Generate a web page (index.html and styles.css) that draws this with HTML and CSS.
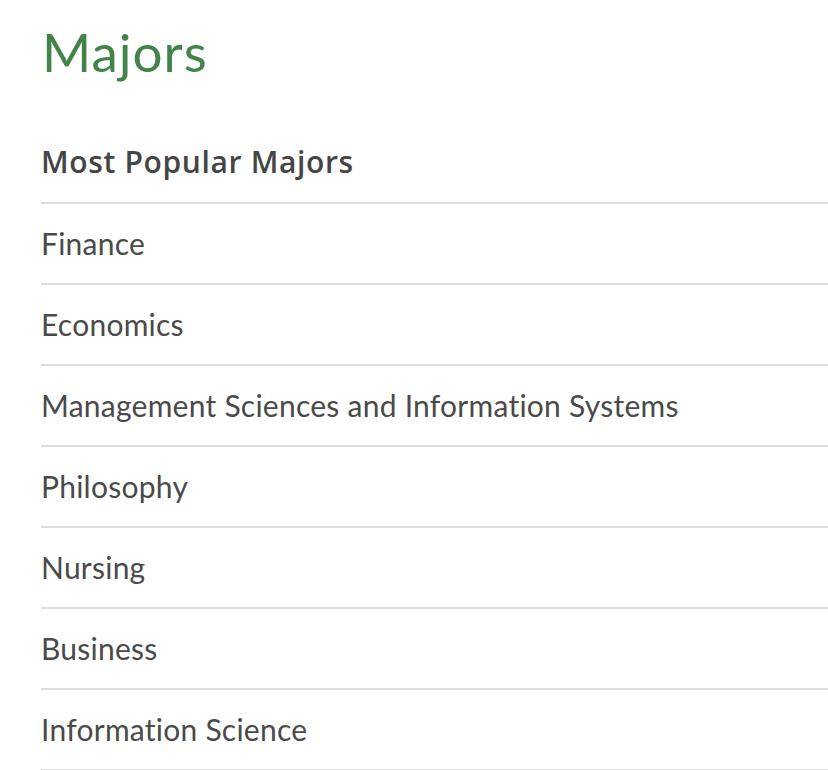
FILE: index.html
```html
<!DOCTYPE html>
<html lang="en">
<head>
<meta charset="utf-8">
<title>Majors</title>
<link rel="stylesheet" href="styles.css">
</head>
<body>
<section class="majors">
  <h1 class="majors-title">Majors</h1>
  <h2 class="majors-heading">Most Popular Majors</h2>
  <ul class="majors-list">
    <li class="majors-item">Finance</li>
    <li class="majors-item">Economics</li>
    <li class="majors-item">Management Sciences and Information Systems</li>
    <li class="majors-item">Philosophy</li>
    <li class="majors-item">Nursing</li>
    <li class="majors-item">Business</li>
    <li class="majors-item">Information Science</li>
  </ul>
</section>
</body>
</html>
```
FILE: styles.css
```css
html, body {
  margin: 0;
  padding: 0;
  background: #fff;
}
.majors {
  padding: 25px 0 0 41px;
  font-family: "Lato", "Open Sans", sans-serif;
  color: #4a4a4a;
}
.majors-title {
  margin: 0 0 66px 1px;
  font-family: "Lato", sans-serif;
  font-weight: 400;
  font-size: 53px;
  line-height: 53px;
  letter-spacing: 1px;
  color: #42834a;
}
.majors-heading {
  margin: 0;
  padding-bottom: 22px;
  font-family: "Open Sans", sans-serif;
  font-weight: 600;
  font-size: 30px;
  line-height: 36px;
  letter-spacing: 0.65px;
  color: #454545;
  border-bottom: 2px solid #dddddd;
}
.majors-list {
  list-style: none;
  margin: 0;
  padding: 0;
}
.majors-item {
  padding: 21px 0 22px;
  font-size: 30px;
  line-height: 36px;
  letter-spacing: 0.25px;
  color: #4a4a4a;
  border-bottom: 2px solid #dddddd;
}
```
